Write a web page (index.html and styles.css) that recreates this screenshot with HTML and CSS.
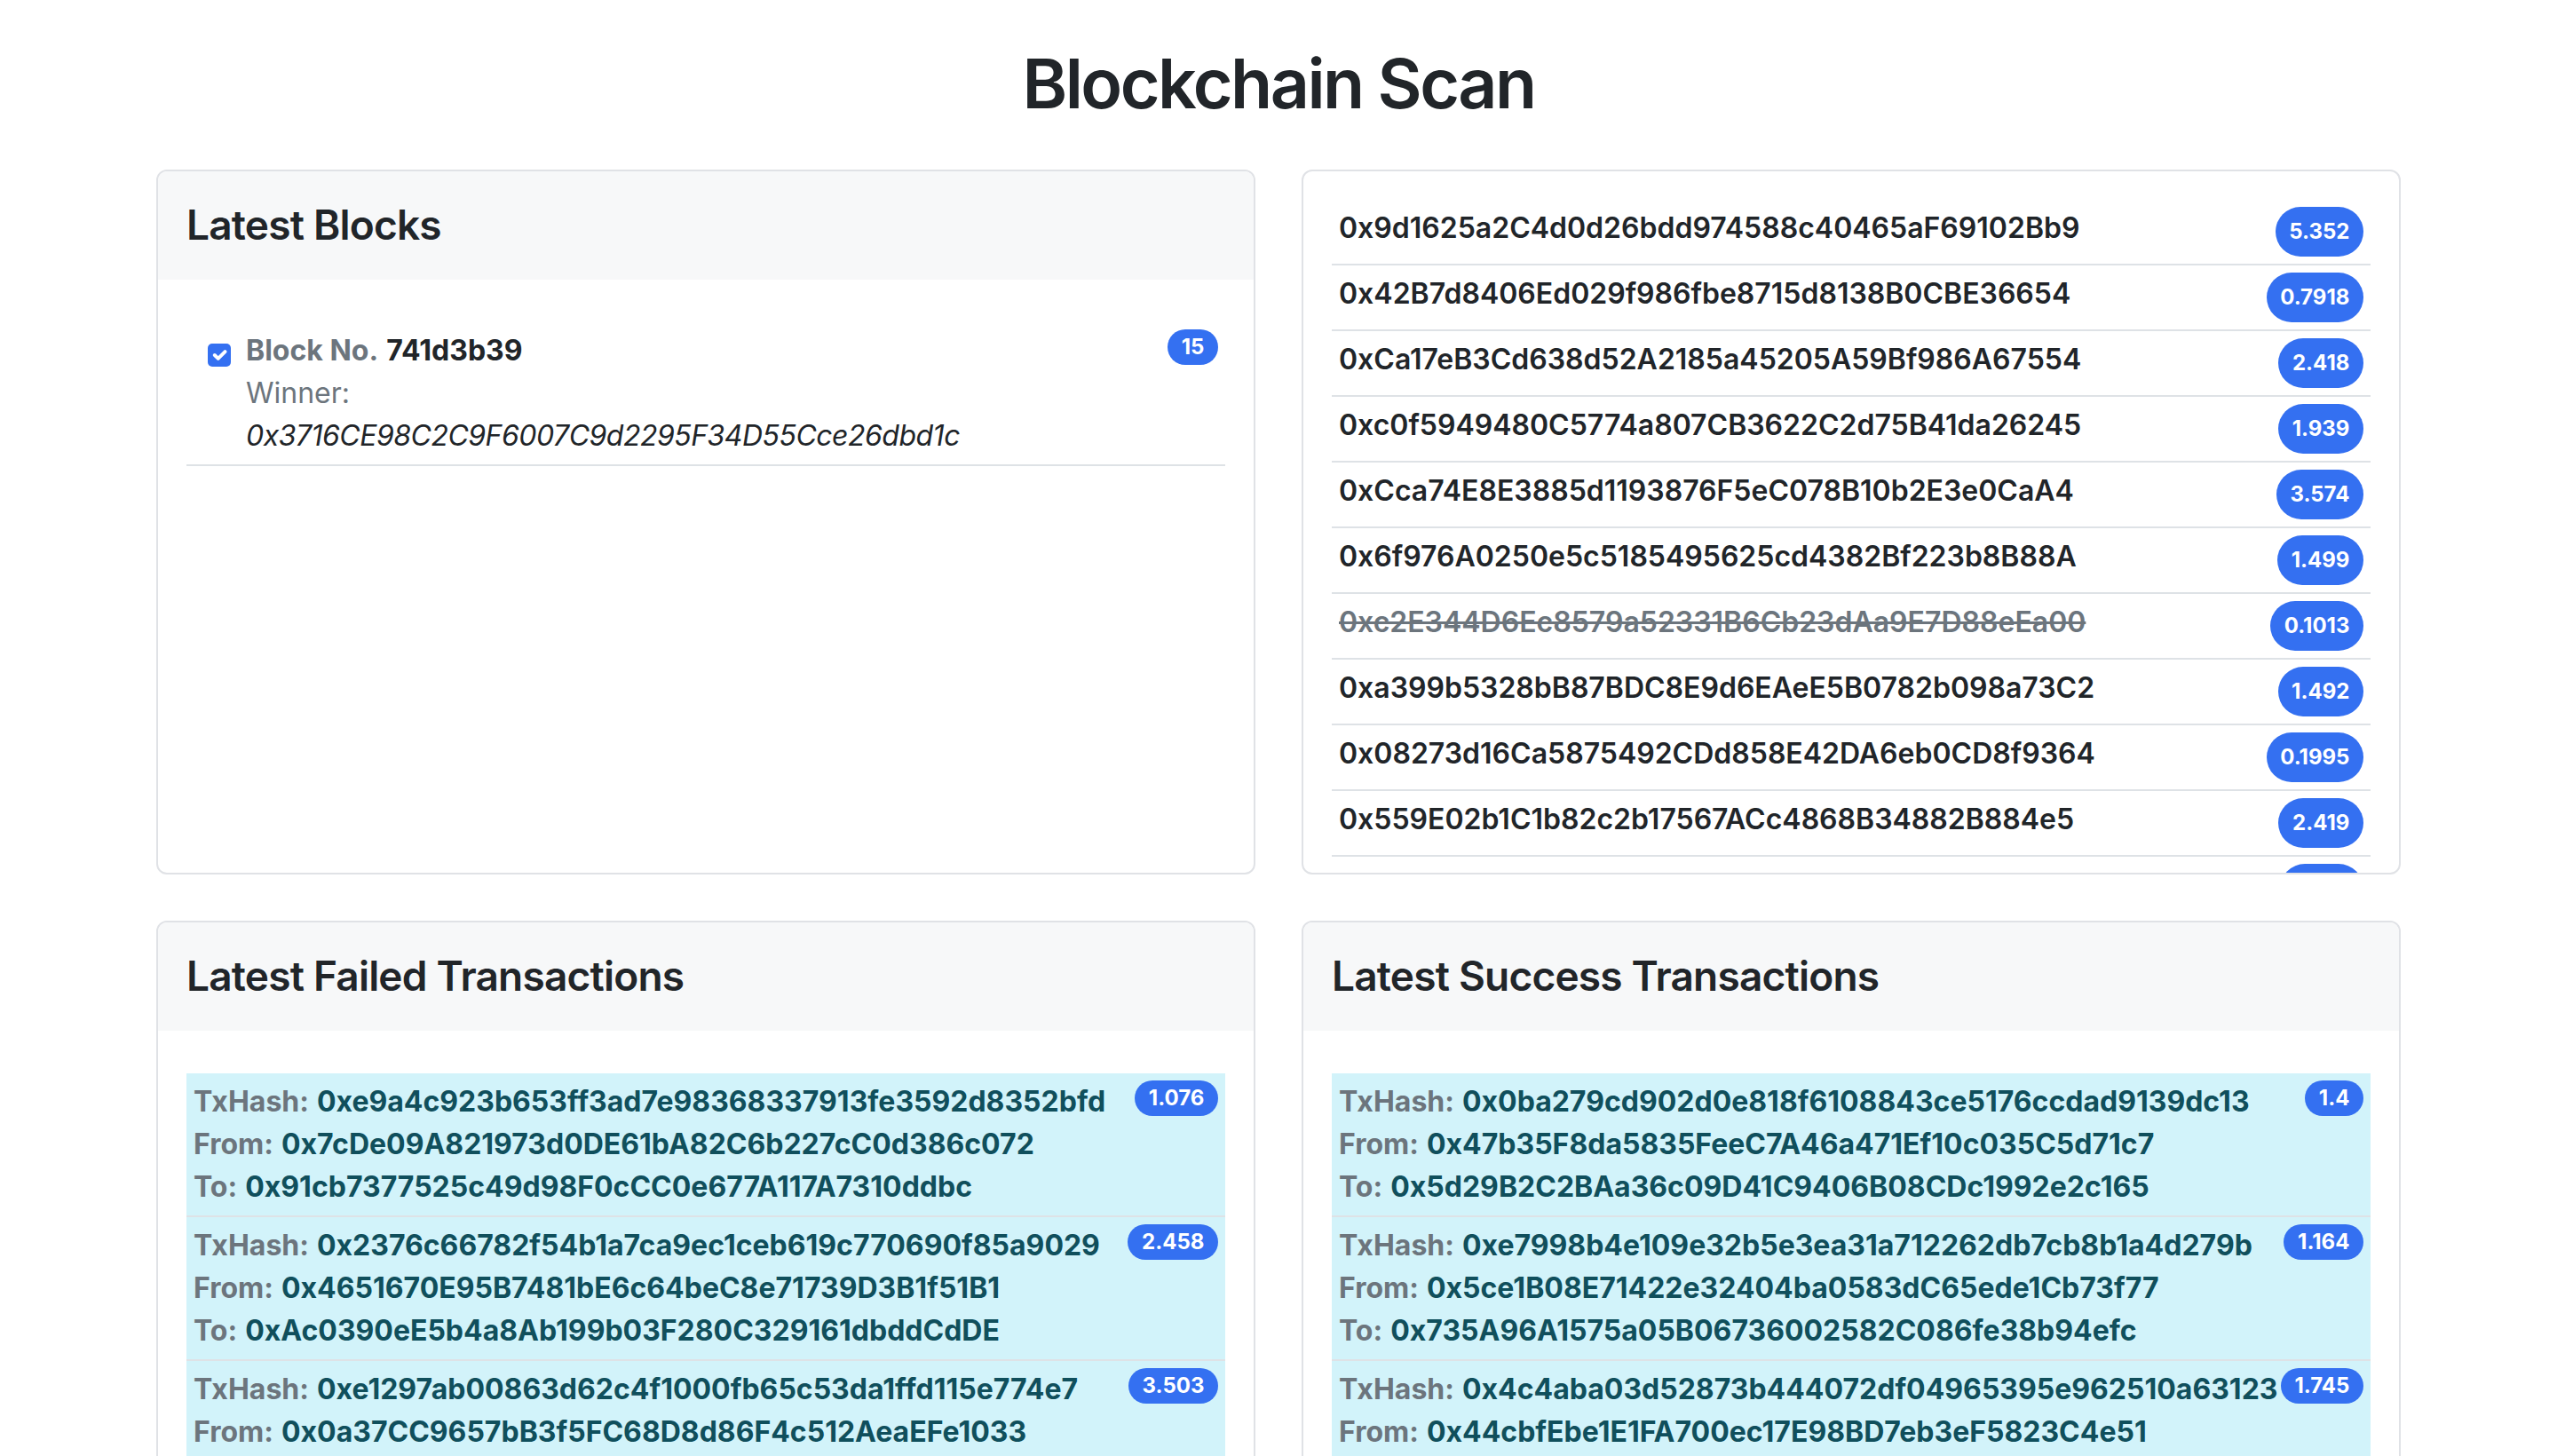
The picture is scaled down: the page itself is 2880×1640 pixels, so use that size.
FILE: index.html
```html
<!DOCTYPE html>
<html lang="en">
<head>
<meta charset="utf-8">
<title>Blockchain Scan</title>
<link rel="stylesheet" href="styles.css">
</head>
<body>
<main class="page">
  <h1 class="title">Blockchain Scan</h1>
  <div class="grid">
    <section class="card card-top">
      <header class="card-header"><h4 class="card-title">Latest Blocks</h4></header>
      <div class="card-body">
        <ul class="list list-spaced">
          <li class="item">
            <div class="block-main">
              <span class="check"><svg viewBox="0 0 20 20" width="26" height="26"><path d="M6 10l3 3 6-6" fill="none" stroke="#fff" stroke-width="3" stroke-linecap="round" stroke-linejoin="round"/></svg></span>
              <div class="block-info">
                <div class="line"><span class="label">Block No.</span> <span class="strong">741d3b39</span></div>
                <div class="line muted">Winner:</div>
                <div class="line italic">0x3716CE98C2C9F6007C9d2295F34D55Cce26dbd1c</div>
              </div>
            </div>
            <span class="badge">15</span>
          </li>
        </ul>
      </div>
    </section>

    <section class="card card-top">
      <div class="card-body">
        <ul class="list">
          <li class="item row"><span class="addr">0x9d1625a2C4d0d26bdd974588c40465aF69102Bb9</span><span class="badge badge-tall">5.352</span></li>
          <li class="item row"><span class="addr">0x42B7d8406Ed029f986fbe8715d8138B0CBE36654</span><span class="badge badge-tall">0.7918</span></li>
          <li class="item row"><span class="addr">0xCa17eB3Cd638d52A2185a45205A59Bf986A67554</span><span class="badge badge-tall">2.418</span></li>
          <li class="item row"><span class="addr">0xc0f5949480C5774a807CB3622C2d75B41da26245</span><span class="badge badge-tall">1.939</span></li>
          <li class="item row"><span class="addr">0xCca74E8E3885d1193876F5eC078B10b2E3e0CaA4</span><span class="badge badge-tall">3.574</span></li>
          <li class="item row"><span class="addr">0x6f976A0250e5c5185495625cd4382Bf223b8B88A</span><span class="badge badge-tall">1.499</span></li>
          <li class="item row"><span class="addr addr-struck">0xc2E344D6Ec8579a52331B6Cb23dAa9E7D88eEa00</span><span class="badge badge-tall">0.1013</span></li>
          <li class="item row"><span class="addr">0xa399b5328bB87BDC8E9d6EAeE5B0782b098a73C2</span><span class="badge badge-tall">1.492</span></li>
          <li class="item row"><span class="addr">0x08273d16Ca5875492CDd858E42DA6eb0CD8f9364</span><span class="badge badge-tall">0.1995</span></li>
          <li class="item row"><span class="addr">0x559E02b1C1b82c2b17567ACc4868B34882B884e5</span><span class="badge badge-tall">2.419</span></li>
          <li class="item row"><span class="addr">0x3b1f0E4a9C27d85e6A40bD19c3F7e2A58d60C4b1</span><span class="badge badge-tall">1.027</span></li>
        </ul>
      </div>
    </section>

    <section class="card">
      <header class="card-header"><h4 class="card-title">Latest Failed Transactions</h4></header>
      <div class="card-body">
        <ul class="list list-spaced">
          <li class="item tx">
            <div class="tx-lines">
              <div class="line"><span class="label">TxHash:</span> <span class="strong">0xe9a4c923b653ff3ad7e98368337913fe3592d8352bfd</span></div>
              <div class="line"><span class="label">From:</span> <span class="strong">0x7cDe09A821973d0DE61bA82C6b227cC0d386c072</span></div>
              <div class="line"><span class="label">To:</span> <span class="strong">0x91cb7377525c49d98F0cCC0e677A117A7310ddbc</span></div>
            </div>
            <span class="badge">1.076</span>
          </li>
          <li class="item tx">
            <div class="tx-lines">
              <div class="line"><span class="label">TxHash:</span> <span class="strong">0x2376c66782f54b1a7ca9ec1ceb619c770690f85a9029</span></div>
              <div class="line"><span class="label">From:</span> <span class="strong">0x4651670E95B7481bE6c64beC8e71739D3B1f51B1</span></div>
              <div class="line"><span class="label">To:</span> <span class="strong">0xAc0390eE5b4a8Ab199b03F280C329161dbddCdDE</span></div>
            </div>
            <span class="badge">2.458</span>
          </li>
          <li class="item tx">
            <div class="tx-lines">
              <div class="line"><span class="label">TxHash:</span> <span class="strong">0xe1297ab00863d62c4f1000fb65c53da1ffd115e774e7</span></div>
              <div class="line"><span class="label">From:</span> <span class="strong">0x0a37CC9657bB3f5FC68D8d86F4c512AeaEFe1033</span></div>
              <div class="line"><span class="label">To:</span> <span class="strong">0x5B8e21dC07aF93e4b61A2c8D9f0E73b5C46a1e2d</span></div>
            </div>
            <span class="badge">3.503</span>
          </li>
        </ul>
      </div>
    </section>

    <section class="card">
      <header class="card-header"><h4 class="card-title">Latest Success Transactions</h4></header>
      <div class="card-body">
        <ul class="list list-spaced">
          <li class="item tx">
            <div class="tx-lines">
              <div class="line"><span class="label">TxHash:</span> <span class="strong">0x0ba279cd902d0e818f6108843ce5176ccdad9139dc13</span></div>
              <div class="line"><span class="label">From:</span> <span class="strong">0x47b35F8da5835FeeC7A46a471Ef10c035C5d71c7</span></div>
              <div class="line"><span class="label">To:</span> <span class="strong">0x5d29B2C2BAa36c09D41C9406B08CDc1992e2c165</span></div>
            </div>
            <span class="badge">1.4</span>
          </li>
          <li class="item tx">
            <div class="tx-lines">
              <div class="line"><span class="label">TxHash:</span> <span class="strong">0xe7998b4e109e32b5e3ea31a712262db7cb8b1a4d279b</span></div>
              <div class="line"><span class="label">From:</span> <span class="strong">0x5ce1B08E71422e32404ba0583dC65ede1Cb73f77</span></div>
              <div class="line"><span class="label">To:</span> <span class="strong">0x735A96A1575a05B06736002582C086fe38b94efc</span></div>
            </div>
            <span class="badge">1.164</span>
          </li>
          <li class="item tx">
            <div class="tx-lines">
              <div class="line"><span class="label">TxHash:</span> <span class="strong">0x4c4aba03d52873b444072df04965395e962510a63123</span></div>
              <div class="line"><span class="label">From:</span> <span class="strong">0x44cbfEbe1E1FA700ec17E98BD7eb3eF5823C4e51</span></div>
              <div class="line"><span class="label">To:</span> <span class="strong">0x9aE4c17B2d05F36a8C9e1b40D72f5A3c86b0E9d4</span></div>
            </div>
            <span class="badge">1.745</span>
          </li>
        </ul>
      </div>
    </section>
  </div>
</main>
</body>
</html>
```

FILE: styles.css
```css
* { box-sizing: border-box; }

html { overflow: hidden; }

body {
  margin: 0;
  font-family: Inter, "Noto Sans", "Liberation Sans", sans-serif;
  font-size: 32px;
  line-height: 48px;
  color: #212529;
  background: #fff;
}

.page {
  width: 2528px;
  margin: 0 auto;
}

.title {
  margin: 46px 0 49px;
  font-size: 77px;
  font-weight: 600;
  line-height: 96px;
  text-align: center;
  letter-spacing: -2.5px;
}

.grid {
  display: grid;
  grid-template-columns: 1fr 1fr;
  column-gap: 52px;
  row-gap: 52px;
}

.card {
  border: 2px solid #e0e2e6;
  border-radius: 12px;
  overflow: hidden;
  background: #fff;
  min-width: 0;
}

.card-top { height: 794px; }

.card-header {
  background: #f7f8f9;
  padding: 32px 32px 16px;
}

.card-title {
  margin: 0 0 16px;
  font-size: 46px;
  font-weight: 600;
  line-height: 57.6px;
  letter-spacing: -0.8px;
}

.card-body { padding: 32px; }

.list {
  list-style: none;
  margin: 0;
  padding: 0;
}

.list-spaced { margin-top: 16px; }

.item {
  display: flex;
  align-items: flex-start;
  justify-content: space-between;
  padding: 8px;
  border-bottom: 2px solid #dee2e6;
}

.block-main {
  display: flex;
  align-items: flex-start;
}

.check {
  display: flex;
  align-items: center;
  justify-content: center;
  width: 26px;
  height: 26px;
  margin: 16px 17px 0 16px;
  border-radius: 5px;
  background: #3470f1;
}

.line { white-space: nowrap; }

.label {
  color: #6c757d;
  font-weight: 700;
}

.strong { font-weight: 700; }

.muted { color: #6c757d; }

.italic {
  font-style: italic;
  letter-spacing: -0.5px;
}

.addr {
  font-weight: 600;
  white-space: nowrap;
}

.addr-struck {
  color: #6c757d;
  text-decoration: line-through;
}

.badge {
  flex: none;
  display: inline-block;
  padding: 8px 15.6px;
  border-radius: 999px;
  background: #3470f1;
  color: #fff;
  font-size: 24px;
  font-weight: 700;
  line-height: 24px;
  text-align: center;
}

.badge-tall { padding: 16px 15.6px; }

.tx {
  background: #d2f3fa;
  color: #104f5c;
}

.tx-lines { min-width: 0; }
```
